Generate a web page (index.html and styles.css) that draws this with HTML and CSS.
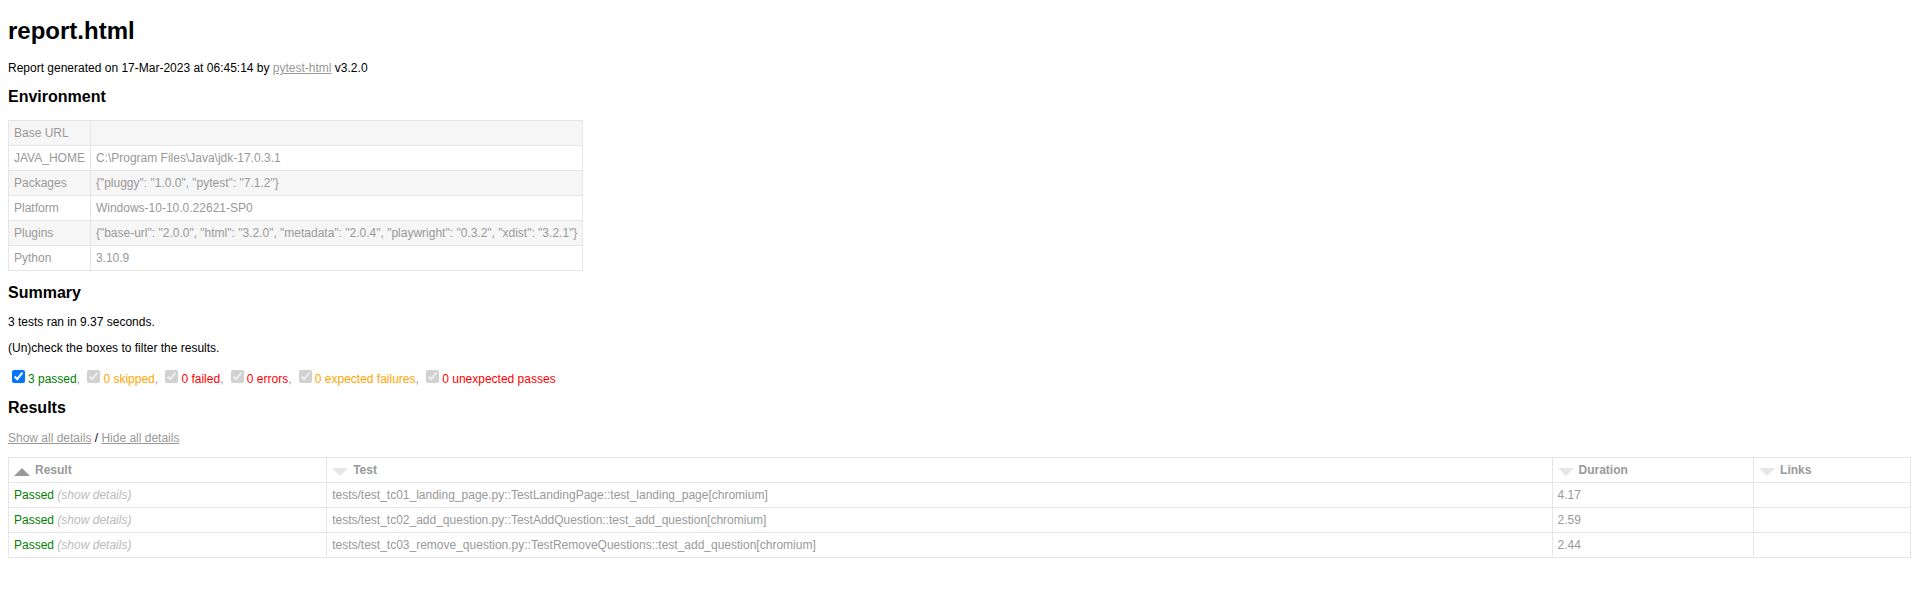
FILE: index.html
```html
<!DOCTYPE html>
<html>
<head>
<meta charset="utf-8">
<title>Test Report</title>
<link rel="stylesheet" href="styles.css">
</head>
<body>
<h1>report.html</h1>
<p>Report generated on 17-Mar-2023 at 06:45:14 by <a href="#">pytest-html</a> v3.2.0</p>
<h2>Environment</h2>
<table class="environment">
<tr><td>Base URL</td><td></td></tr>
<tr><td>JAVA_HOME</td><td>C:\Program Files\Java\jdk-17.0.3.1</td></tr>
<tr><td>Packages</td><td>{"pluggy": "1.0.0", "pytest": "7.1.2"}</td></tr>
<tr><td>Platform</td><td>Windows-10-10.0.22621-SP0</td></tr>
<tr><td>Plugins</td><td>{"base-url": "2.0.0", "html": "3.2.0", "metadata": "2.0.4", "playwright": "0.3.2", "xdist": "3.2.1"}</td></tr>
<tr><td>Python</td><td>3.10.9</td></tr>
</table>
<h2>Summary</h2>
<p>3 tests ran in 9.37 seconds. </p>
<p class="filter">(Un)check the boxes to filter the results.</p>
<input checked class="filter" type="checkbox"><span class="passed">3 passed</span>, <input checked class="filter" disabled type="checkbox"><span class="skipped">0 skipped</span>, <input checked class="filter" disabled type="checkbox"><span class="failed">0 failed</span>, <input checked class="filter" disabled type="checkbox"><span class="error">0 errors</span>, <input checked class="filter" disabled type="checkbox"><span class="xfailed">0 expected failures</span>, <input checked class="filter" disabled type="checkbox"><span class="xpassed">0 unexpected passes</span>
<h2>Results</h2>
<p><a href="#">Show all details</a> / <a href="#">Hide all details</a></p>
<table class="results-table">
<thead>
<tr>
<th class="sortable asc active"><div class="sort-icon"></div>Result</th>
<th class="sortable inactive"><div class="sort-icon"></div>Test</th>
<th class="sortable inactive"><div class="sort-icon"></div>Duration</th>
<th class="sortable inactive"><div class="sort-icon"></div>Links</th>
</tr>
</thead>
<tbody class="passed">
<tr>
<td class="col-result">Passed<span class="expander"></span></td>
<td class="col-name">tests/test_tc01_landing_page.py::TestLandingPage::test_landing_page[chromium]</td>
<td class="col-duration">4.17</td>
<td class="col-links"></td>
</tr>
</tbody>
<tbody class="passed">
<tr>
<td class="col-result">Passed<span class="expander"></span></td>
<td class="col-name">tests/test_tc02_add_question.py::TestAddQuestion::test_add_question[chromium]</td>
<td class="col-duration">2.59</td>
<td class="col-links"></td>
</tr>
</tbody>
<tbody class="passed">
<tr>
<td class="col-result">Passed<span class="expander"></span></td>
<td class="col-name">tests/test_tc03_remove_question.py::TestRemoveQuestions::test_add_question[chromium]</td>
<td class="col-duration">2.44</td>
<td class="col-links"></td>
</tr>
</tbody>
</table>
</body>
</html>
```

FILE: styles.css
```css
body {
  font-family: "Liberation Sans", Arial, Helvetica, sans-serif;
  font-size: 12px;
  min-width: 800px;
  color: #999;
  margin: 8px 6px 8px 8px;
}

h1 {
  font-size: 24px;
  color: black;
  margin-top: 9px;
}

h2 {
  font-size: 16px;
  color: black;
}

p {
  color: black;
}

a {
  color: #999;
}

table {
  border-collapse: collapse;
}

.environment td {
  padding: 5px;
  border: 1px solid #E6E6E6;
}

.environment tr:nth-child(odd) {
  background-color: #f6f6f6;
}

span.passed,
.passed .col-result {
  color: green;
}

span.skipped,
span.xfailed {
  color: orange;
}

span.error,
span.failed,
span.xpassed {
  color: red;
}

.results-table {
  border: 1px solid #e6e6e6;
  color: #999;
  font-size: 12px;
  width: 100%;
}

.results-table th,
.results-table td {
  padding: 5px;
  border: 1px solid #E6E6E6;
  text-align: left;
}

.results-table th {
  font-weight: bold;
}

.expander::after {
  content: " (show details)";
  color: #BBB;
  font-style: italic;
  cursor: pointer;
}

.sortable {
  cursor: pointer;
}

.sort-icon {
  float: left;
  margin-right: 5px;
  margin-top: 5px;
  width: 0;
  height: 0;
  border-left: 8px solid transparent;
  border-right: 8px solid transparent;
}

.inactive .sort-icon {
  border-top: 8px solid #E6E6E6;
}

.asc.active .sort-icon {
  border-bottom: 8px solid #999;
}
```
